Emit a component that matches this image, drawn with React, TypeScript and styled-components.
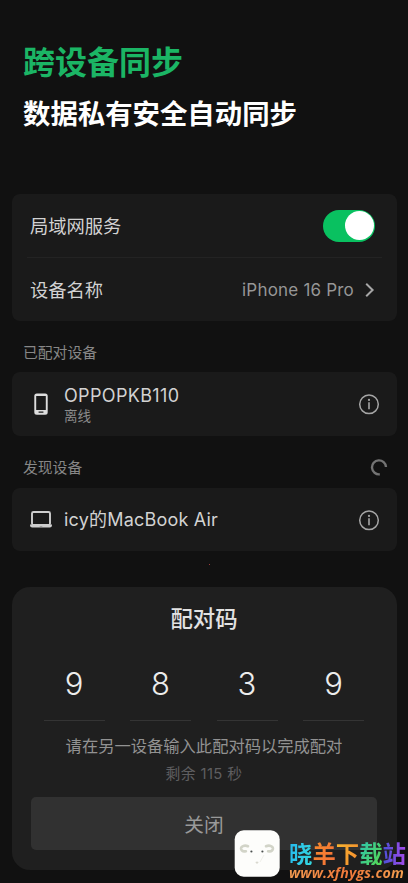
import React from "react";
import styled, { createGlobalStyle } from "styled-components";

const GlobalStyle = createGlobalStyle`
  * { box-sizing: border-box; }
  html, body { margin: 0; background: #111111; }
  body { overflow: hidden; }
`;

const Screen = styled.main`
  position: relative;
  width: 408px;
  height: 883px;
  padding: 0 11px 0 12px;
  overflow: hidden;
  background: #111111;
  color: #d2d2d2;
  font-family: Inter, "Noto Sans CJK SC", sans-serif;
  display: flex;
  flex-direction: column;
  white-space: nowrap;
`;

const Header = styled.header`
  height: 194px;
  padding: 40px 0 0 11px;
  font-family: "Noto Sans CJK SC", sans-serif;
  font-weight: 700;
`;

const Title = styled.h1`
  margin: 0;
  font-size: 32px;
  line-height: 40px;
  font-weight: 700;
  color: #1bb565;
`;

const Subtitle = styled.h2`
  margin: 13px 0 0;
  font-size: 27.4px;
  line-height: 38px;
  font-weight: 700;
  color: #ffffff;
`;

const Card = styled.section<{ $height: number }>`
  height: ${(p) => p.$height}px;
  flex: none;
  border-radius: 8px;
  background: #1a1a1a;
`;

const SettingRow = styled.div`
  height: 63px;
  padding: 0 22px 0 18px;
  display: flex;
  align-items: center;
  justify-content: space-between;
`;

const Divider = styled.hr`
  height: 1px;
  margin: 0 15px;
  border: 0;
  background: #232323;
`;

const Label = styled.span`
  font-size: 18.3px;
  line-height: 26px;
`;

const Value = styled.span`
  display: flex;
  align-items: center;
  gap: 10px;
  font-size: 17px;
  line-height: 24px;
  letter-spacing: 0.2px;
  color: #969696;
`;

const Switch = styled.span`
  width: 52px;
  height: 32px;
  padding: 1.5px;
  border-radius: 16px;
  display: flex;
  justify-content: flex-end;
  background: #09c160;
`;

const Knob = styled.span`
  width: 29px;
  height: 29px;
  border-radius: 50%;
  background: #ffffff;
`;

const SectionHeader = styled.div<{ $height: number; $bottom: number }>`
  height: ${(p) => p.$height}px;
  flex: none;
  padding: 0 9px ${(p) => p.$bottom}px 11px;
  display: flex;
  align-items: flex-end;
  justify-content: space-between;
  font-size: 14.8px;
  line-height: 17px;
  color: #878787;
`;

const DeviceRow = styled.div`
  height: 100%;
  padding: 0 17px;
  display: flex;
  align-items: center;
`;

const DeviceText = styled.div`
  flex: 1;
  padding-left: 11px;
`;

const DeviceName = styled.div<{ $spacing: number }>`
  font-size: 18px;
  line-height: 24px;
  letter-spacing: ${(p) => p.$spacing}px;
`;

const DeviceState = styled.div`
  font-size: 13.5px;
  line-height: 17px;
  color: #8b8b8b;
`;

const Sheet = styled.section`
  height: 283px;
  flex: none;
  margin-top: 36px;
  padding: 18px 20px 20px 19px;
  border-radius: 18px;
  background: #1f1f1f;
  display: flex;
  flex-direction: column;
  text-align: center;
`;

const SheetTitle = styled.h3`
  margin: 0;
  font-size: 22.4px;
  line-height: 28px;
  font-weight: 500;
  color: #e2e2e2;
`;

const Digits = styled.div`
  display: grid;
  grid-template-columns: repeat(4, 61px);
  justify-content: space-between;
  margin: 23px 13px 0 12.5px;
`;

const Digit = styled.div`
  height: 65px;
  border-bottom: 1px solid #343434;
  font-size: 31px;
  line-height: 56px;
  font-weight: 300;
  color: #ececec;
`;

const Hint = styled.p`
  margin: 12px 0 0;
  font-size: 16.3px;
  line-height: 26px;
  color: #929292;
`;

const Remaining = styled.p`
  margin: 4px 0 0;
  font-size: 14.8px;
  line-height: 22px;
  letter-spacing: 0.4px;
  color: #5e5e60;
`;

const CloseButton = styled.button`
  height: 53px;
  margin-top: auto;
  padding: 0;
  border: 0;
  border-radius: 5px;
  background: #313131;
  color: #999999;
  font: 400 19.7px/53px "Noto Sans CJK SC", sans-serif;
`;

const Watermark = styled.aside`
  position: absolute;
  left: 234px;
  top: 830px;
  display: flex;
  gap: 9px;
`;

const WatermarkText = styled.div`
  padding-top: 11px;
`;

const SiteName = styled.div`
  display: flex;
  font: 700 23.4px/24px "Noto Sans CJK SC", sans-serif;
`;

const Glyph = styled.span<{ $paint: string }>`
  color: transparent;
  background: ${(p) => p.$paint};
  background-clip: text;
  -webkit-background-clip: text;
`;

const SiteUrl = styled.div`
  font: italic 700 14.2px/16px "Open Sans", sans-serif;
  letter-spacing: 0.15px;
  color: transparent;
  background: linear-gradient(90deg, #f29a50, #f0783a 50%, #f3a050);
  background-clip: text;
  -webkit-background-clip: text;
`;

const RecordingDot = styled.i`
  position: absolute;
  left: 209px;
  top: 564px;
  width: 1px;
  height: 1px;
  background: #a03c3c;
`;

const Chevron = () => (
  <svg width="11" height="16" viewBox="0 0 11 16" fill="none" stroke="#a6a6a6" strokeWidth="2">
    <path d="M2.2 1.8L8.6 8l-6.4 6.2" />
  </svg>
);

const InfoIcon = () => (
  <svg width="22" height="22" viewBox="0 0 22 22" fill="none" stroke="#a6a6a6" strokeWidth="1.5">
    <circle cx="11" cy="11.3" r="9.3" />
    <path d="M11 9.3v7" strokeWidth="1.6" />
    <circle cx="11" cy="6.9" r="1.1" fill="#a6a6a6" stroke="none" />
  </svg>
);

const PhoneIcon = () => (
  <svg width="24" height="24" viewBox="0 0 24 24">
    <path
      fill="#dddddd"
      fillRule="evenodd"
      d="M7.8 1.4h8.4a2.5 2.5 0 0 1 2.5 2.5v16.4a2.5 2.5 0 0 1-2.5 2.5H7.8a2.5 2.5 0 0 1-2.5-2.5V3.9a2.5 2.5 0 0 1 2.5-2.5ZM7.2 4v14h9.6V4ZM9.6 19.6v1.1h4.8v-1.1Z"
    />
  </svg>
);

const LaptopIcon = () => (
  <svg width="24" height="24" viewBox="0 0 24 24">
    <rect x="3" y="4" width="18" height="13" rx="1.5" fill="none" stroke="#cecece" strokeWidth="1.9" />
    <path
      fill="#cecece"
      fillRule="evenodd"
      d="M1 16.5h22v.8a2.2 2.2 0 0 1-2.2 2.2H3.2A2.2 2.2 0 0 1 1 17.3ZM10.7 17.3v1h2.6v-1Z"
    />
  </svg>
);

const Spinner = () => (
  <svg width="18" height="18" viewBox="0 0 18 18" fill="none" stroke="#737373" strokeWidth="2.4">
    <path d="M9.8 15.3A7 7 0 1 1 16 8" />
  </svg>
);

const SheepLogo = () => (
  <svg width="46" height="47" viewBox="0 0 46 47" fill="none">
    <rect x=".7" y=".3" width="45" height="46.4" rx="9" fill="#fdfdfb" />
    <g stroke="#d2d4c8" strokeWidth="2.6" strokeLinecap="round">
      <path d="M14 16.3c-3.6-1.6-7.4.2-6.9 2.7.5 2 2.3 2.8 4.8 2.2" />
      <path d="M32 16.3c3.6-1.6 7.4.2 6.9 2.7-.5 2-2.3 2.8-4.8 2.2" />
    </g>
    <circle cx="17.4" cy="21.5" r="1.1" fill="#4a4f4d" />
    <circle cx="28.4" cy="21.5" r="1.1" fill="#4a4f4d" />
    <path d="M21 32q2 3 4 0M30 25l-4 7" stroke="#e9e9e2" strokeWidth=".7" />
    <circle cx="23" cy="32.5" r="1" fill="#d6d5cc" />
  </svg>
);

const SITE_GLYPHS = [
  { char: "晓", paint: "linear-gradient(100deg, #25b9ef, #35d8de)" },
  { char: "羊", paint: "linear-gradient(120deg, #f58b2c, #f4703a)" },
  { char: "下", paint: "linear-gradient(110deg, #f7b731, #f58a2d)" },
  { char: "载", paint: "linear-gradient(120deg, #2cc5b4, #58d84b)" },
  { char: "站", paint: "linear-gradient(90deg, #4b50d8, #a44bea)" },
];

export default function App() {
  return (
    <>
      <GlobalStyle />
      <Screen>
        <Header>
          <Title>跨设备同步</Title>
          <Subtitle>数据私有安全自动同步</Subtitle>
        </Header>

        <Card $height={127}>
          <SettingRow>
            <Label>局域网服务</Label>
            <Switch role="switch" aria-checked="true">
              <Knob />
            </Switch>
          </SettingRow>
          <Divider />
          <SettingRow>
            <Label>设备名称</Label>
            <Value>
              iPhone 16 Pro
              <Chevron />
            </Value>
          </SettingRow>
        </Card>

        <SectionHeader $height={51} $bottom={10}>
          已配对设备
        </SectionHeader>
        <Card $height={64}>
          <DeviceRow>
            <PhoneIcon />
            <DeviceText>
              <DeviceName $spacing={0.35}>OPPOPKB110</DeviceName>
              <DeviceState>离线</DeviceState>
            </DeviceText>
            <InfoIcon />
          </DeviceRow>
        </Card>

        <SectionHeader $height={52} $bottom={11}>
          发现设备
          <Spinner />
        </SectionHeader>
        <Card $height={63}>
          <DeviceRow>
            <LaptopIcon />
            <DeviceText>
              <DeviceName $spacing={0.2}>icy的MacBook Air</DeviceName>
            </DeviceText>
            <InfoIcon />
          </DeviceRow>
        </Card>

        <Sheet>
          <SheetTitle>配对码</SheetTitle>
          <Digits>
            {["9", "8", "3", "9"].map((digit, i) => (
              <Digit key={i}>{digit}</Digit>
            ))}
          </Digits>
          <Hint>请在另一设备输入此配对码以完成配对</Hint>
          <Remaining>剩余 115 秒</Remaining>
          <CloseButton>关闭</CloseButton>
        </Sheet>

        <RecordingDot />

        <Watermark>
          <SheepLogo />
          <WatermarkText>
            <SiteName>
              {SITE_GLYPHS.map((g) => (
                <Glyph key={g.char} $paint={g.paint}>
                  {g.char}
                </Glyph>
              ))}
            </SiteName>
            <SiteUrl>www.xfhygs.com</SiteUrl>
          </WatermarkText>
        </Watermark>
      </Screen>
    </>
  );
}
